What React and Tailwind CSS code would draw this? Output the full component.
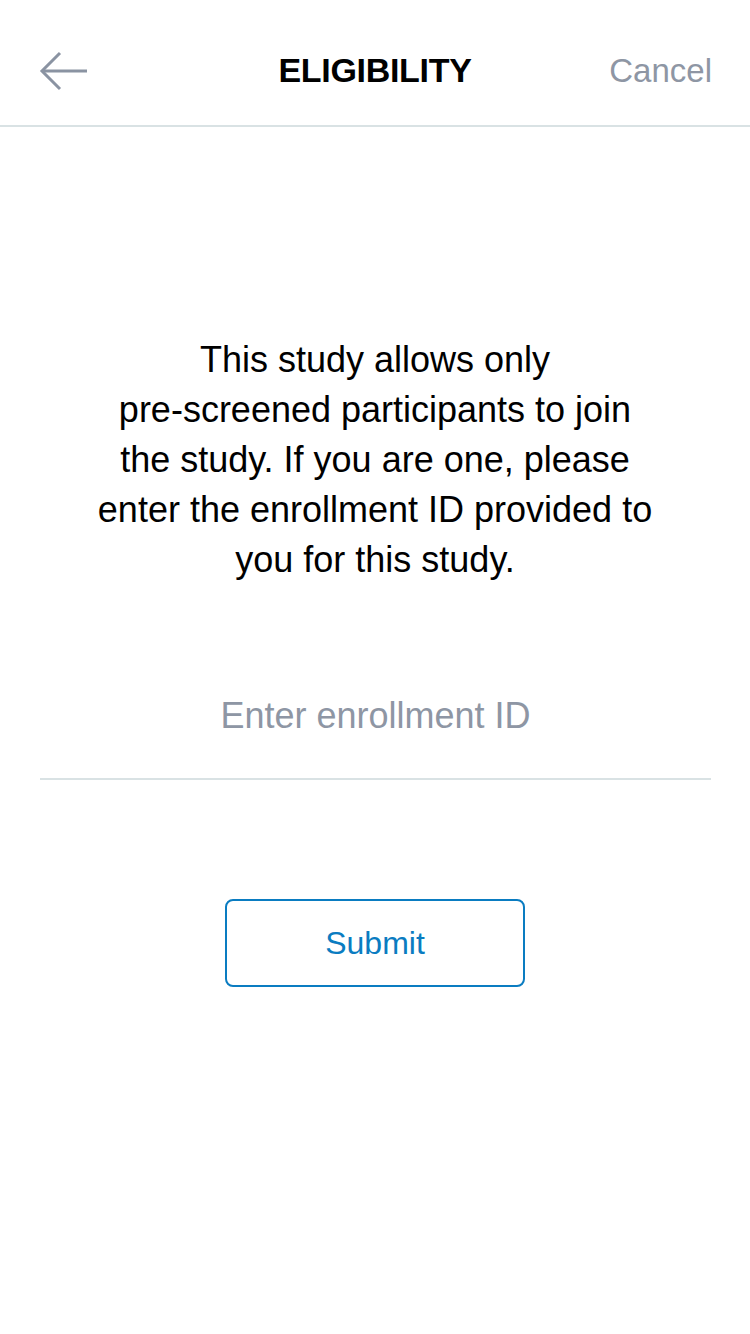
export default function App() {
  return (
    <div className="min-h-[1334px] w-[750px] bg-white font-['Liberation_Sans',Arial,sans-serif] text-black">
      {/* Nav bar */}
      <header className="grid h-[127px] grid-cols-[1fr_auto_1fr] items-center border-b-2 border-[#d9e2e4] px-[38px] pt-[16px]">
        <button className="flex h-[44px] w-[56px] items-center">
          <svg width="52" height="40" viewBox="0 0 52 40" fill="none" stroke="#8a93a2" strokeWidth="3">
            <path d="M49 20H4" />
            <path d="M22 2L4 20l18 18" />
          </svg>
        </button>
        <h1 className="text-[34px] font-bold tracking-[-0.3px]">ELIGIBILITY</h1>
        <button className="justify-self-end text-[33px] text-[#8e96a4]">Cancel</button>
      </header>

      <main className="flex flex-col items-center">
        <p className="mt-[208px] text-center text-[36px] leading-[50px]">
          This study allows only
          <br />
          pre-screened participants to join
          <br />
          the study. If you are one, please
          <br />
          enter the enrollment ID provided to
          <br />
          you for this study.
        </p>

        <div className="mt-[106px] w-[671px] self-start ml-[40px] border-b-2 border-[#d9e2e4] pb-[37px]">
          <input
            type="text"
            placeholder="Enter enrollment ID"
            className="h-[50px] w-full bg-transparent text-center text-[36px] leading-[50px] outline-none placeholder:text-[#8e96a4]"
          />
        </div>

        <button className="mt-[119px] h-[88px] w-[300px] rounded-[8px] border-2 border-[#0a7cc1] text-[32px] text-[#0a7cc1]">
          Submit
        </button>
      </main>
    </div>
  );
}
